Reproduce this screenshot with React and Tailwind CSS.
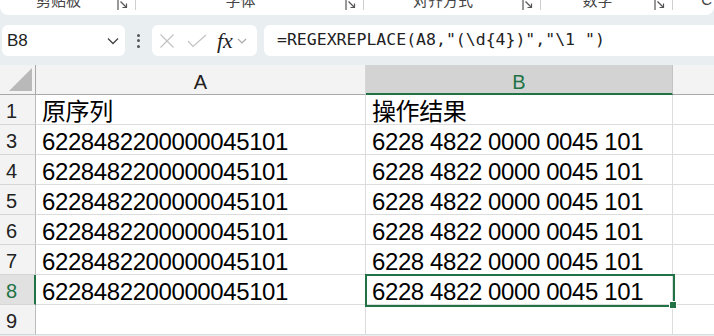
import React from 'react';

const ribbonGroups = [
  { label: '剪贴板', width: 'w-[136px]' },
  { label: '字体', width: 'w-[228px]' },
  { label: '对齐方式', width: 'w-[177px]' },
  { label: '数字', width: 'w-[132px]' },
];

const rows = [
  { n: 1, a: '原序列', b: '操作结果' },
  { n: 3, a: '6228482200000045101', b: '6228 4822 0000 0045 101' },
  { n: 4, a: '6228482200000045101', b: '6228 4822 0000 0045 101' },
  { n: 5, a: '6228482200000045101', b: '6228 4822 0000 0045 101' },
  { n: 6, a: '6228482200000045101', b: '6228 4822 0000 0045 101' },
  { n: 7, a: '6228482200000045101', b: '6228 4822 0000 0045 101' },
  { n: 8, a: '6228482200000045101', b: '6228 4822 0000 0045 101', active: true },
  { n: 9, a: '', b: '' },
];

const Launcher = () => (
  <svg className="w-[11px] h-[11px] text-[#555]" viewBox="0 0 11 11" fill="none" stroke="currentColor" strokeWidth="1.2">
    <path d="M1 0V10" />
    <path d="M3.5 1.5L9.5 7.5" />
    <path d="M9.5 3.5V7.5H5.5" />
  </svg>
);

export default function App() {
  return (
    <div className="w-[714px] h-[336px] overflow-hidden bg-[#e9eef1] font-['Liberation_Sans','Noto_Sans_CJK_SC',sans-serif]">
      {/* Ribbon (cut off at the top of the shot) */}
      <div className="h-[15px] bg-white rounded-b-[8px] overflow-hidden flex">
        {ribbonGroups.map((g) => (
          <div key={g.label} className={`${g.width} flex items-start shrink-0`}>
            <div className="flex-1 text-center text-[15px] leading-[18px] -mt-[9px] text-[#444] font-['Noto_Sans_CJK_SC',sans-serif]">
              {g.label}
            </div>
            <div className="w-[15px]">
              <Launcher />
            </div>
            <div className="w-px h-[10px] bg-[#cfcfcf] ml-[3px]" />
          </div>
        ))}
        <div className="flex-1 flex justify-end pr-[2px]">
          <div className="text-[15px] leading-[18px] -mt-[9px] text-[#444]">C</div>
        </div>
      </div>

      {/* Formula bar */}
      <div className="mt-[10px] h-[31px] flex items-stretch pl-[2px]">
        <div className="w-[123px] bg-white rounded-[6px] flex items-center pl-[5px] pr-[6px]">
          <span className="flex-1 text-[17px] text-[#222]">B8</span>
          <svg className="w-[12px] h-[8px] text-[#444]" viewBox="0 0 12 8" fill="none" stroke="currentColor" strokeWidth="1.3">
            <path d="M1 1.5L6 6.5L11 1.5" />
          </svg>
        </div>
        <div className="w-[27px] flex flex-col items-center justify-center gap-[2.5px]">
          <span className="w-[3px] h-[3px] rounded-full bg-[#555]" />
          <span className="w-[3px] h-[3px] rounded-full bg-[#555]" />
          <span className="w-[3px] h-[3px] rounded-full bg-[#555]" />
        </div>
        <div className="w-[105px] bg-white rounded-[6px] flex items-center pl-[7px]">
          <svg className="w-[16px] h-[16px] text-[#c2c2c2]" viewBox="0 0 16 16" fill="none" stroke="currentColor" strokeWidth="1.2">
            <path d="M1.5 1.5L14.5 14.5M14.5 1.5L1.5 14.5" />
          </svg>
          <svg className="w-[20px] h-[14px] ml-[12px] text-[#c2c2c2]" viewBox="0 0 20 14" fill="none" stroke="currentColor" strokeWidth="1.2">
            <path d="M1 7L6 12.5L19 1" />
          </svg>
          <span className="ml-[10px] text-[22px] leading-none italic text-[#222] font-['Liberation_Serif',serif]">fx</span>
          <svg className="w-[10px] h-[6px] ml-[4px] text-[#aaa]" viewBox="0 0 10 6" fill="none" stroke="currentColor" strokeWidth="1.2">
            <path d="M1 1L5 5L9 1" />
          </svg>
        </div>
        <div className="flex-1 ml-[7px] bg-white rounded-l-[6px] flex items-center pl-[13px] text-[16.5px] text-[#222] font-['DejaVu_Sans_Mono',monospace] whitespace-pre">
          =REGEXREPLACE(A8,"(\d{'{'}4{'}'})","\1 ")
        </div>
      </div>

      {/* Grid */}
      <div className="mt-[9px] relative bg-white">
        <div className="grid grid-cols-[36px_330px_307px_1fr]">
          <div className="h-[30px] bg-[#f3f3f3] border-r border-b border-[#a8a8a8] flex items-end justify-end pr-[3px] pb-[3px]">
            <svg className="w-[23px] h-[23px]" viewBox="0 0 23 23">
              <path d="M23 0V23H0Z" fill="#b9b9b9" />
            </svg>
          </div>
          <div className="h-[30px] bg-[#f3f3f3] border-r border-b border-r-[#d6d6d6] border-b-[#a8a8a8] flex items-end justify-center pb-[2px] text-[20px] leading-[20px] text-[#222]">
            A
          </div>
          <div className="h-[30px] bg-[#d3d3d3] border-r border-r-[#c4c4c4] border-b-2 border-b-[#217346] flex items-end justify-center pb-[1px] text-[20px] leading-[20px] text-[#217346]">
            B
          </div>
          <div className="h-[30px] bg-[#f3f3f3] border-b border-[#a8a8a8]" />

          {rows.map((r) => (
            <React.Fragment key={r.n}>
              <div
                className={`h-[30px] border-b border-b-[#d6d6d6] flex items-end pl-[6px] pb-[3px] text-[20px] leading-[20px] ${
                  r.active
                    ? 'bg-[#e1e1e1] border-r-2 border-r-[#217346] text-[#217346]'
                    : 'bg-[#f3f3f3] border-r border-r-[#bdbdbd] text-[#222]'
                }`}
              >
                {r.n}
              </div>
              <div className="h-[30px] border-r border-b border-[#dcdcdc] flex items-end pl-[6px] text-[24px] leading-[24px] tracking-[-0.4px] text-black whitespace-pre">
                {r.a}
              </div>
              <div className="h-[30px] border-r border-b border-[#dcdcdc] flex items-end pl-[6px] text-[24px] leading-[24px] tracking-[-0.4px] text-black whitespace-pre">
                {r.b}
              </div>
              <div className="h-[30px] border-b border-[#dcdcdc]" />
            </React.Fragment>
          ))}
        </div>

        {/* selected cell B8 */}
        <div className="absolute left-[365px] top-[209px] w-[310px] h-[33px] border-2 border-[#217346] pointer-events-none" />
        <div className="absolute left-[670px] top-[237px] w-[6px] h-[6px] bg-[#217346] outline outline-1 outline-white" />
      </div>
    </div>
  );
}
